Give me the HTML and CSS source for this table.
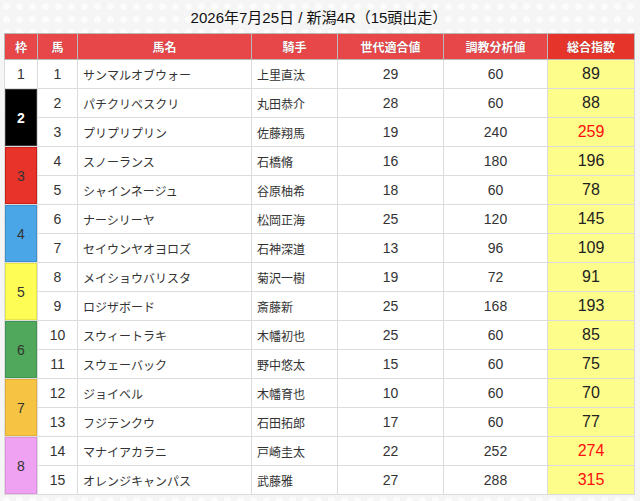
FILE: index.html
```html
<!DOCTYPE html>
<html lang="ja">
<head>
<meta charset="utf-8">
<title>新潟4R</title>
<link rel="stylesheet" href="styles.css">
</head>
<body>
<div class="page">
  <h1 class="title">2026年7月25日 / 新潟4R（15頭出走）</h1>
  <table class="tbl">
    <colgroup>
      <col class="c-waku"><col class="c-uma"><col class="c-name"><col class="c-jockey"><col class="c-gen"><col class="c-train"><col class="c-total">
    </colgroup>
    <thead>
      <tr><th>枠</th><th>馬</th><th>馬名</th><th>騎手</th><th>世代適合値</th><th>調教分析値</th><th class="th-total">総合指数</th></tr>
    </thead>
    <tbody>
      <tr><td class="waku w1">1</td><td class="num">1</td><td class="txt">サンマルオブウォー</td><td class="txt">上里直汰</td><td class="num">29</td><td class="num">60</td><td class="total">89</td></tr>
      <tr><td class="waku w2" rowspan="2">2</td><td class="num">2</td><td class="txt">パチクリベスクリ</td><td class="txt">丸田恭介</td><td class="num">28</td><td class="num">60</td><td class="total">88</td></tr>
      <tr><td class="num">3</td><td class="txt">プリプリプリン</td><td class="txt">佐藤翔馬</td><td class="num">19</td><td class="num">240</td><td class="total hot">259</td></tr>
      <tr><td class="waku w3" rowspan="2">3</td><td class="num">4</td><td class="txt">スノーランス</td><td class="txt">石橋脩</td><td class="num">16</td><td class="num">180</td><td class="total">196</td></tr>
      <tr><td class="num">5</td><td class="txt">シャインネージュ</td><td class="txt">谷原柚希</td><td class="num">18</td><td class="num">60</td><td class="total">78</td></tr>
      <tr><td class="waku w4" rowspan="2">4</td><td class="num">6</td><td class="txt">ナーシリーヤ</td><td class="txt">松岡正海</td><td class="num">25</td><td class="num">120</td><td class="total">145</td></tr>
      <tr><td class="num">7</td><td class="txt">セイウンヤオヨロズ</td><td class="txt">石神深道</td><td class="num">13</td><td class="num">96</td><td class="total">109</td></tr>
      <tr><td class="waku w5" rowspan="2">5</td><td class="num">8</td><td class="txt">メイショウバリスタ</td><td class="txt">菊沢一樹</td><td class="num">19</td><td class="num">72</td><td class="total">91</td></tr>
      <tr><td class="num">9</td><td class="txt">ロジザボード</td><td class="txt">斎藤新</td><td class="num">25</td><td class="num">168</td><td class="total">193</td></tr>
      <tr><td class="waku w6" rowspan="2">6</td><td class="num">10</td><td class="txt">スウィートラキ</td><td class="txt">木幡初也</td><td class="num">25</td><td class="num">60</td><td class="total">85</td></tr>
      <tr><td class="num">11</td><td class="txt">スウェーバック</td><td class="txt">野中悠太</td><td class="num">15</td><td class="num">60</td><td class="total">75</td></tr>
      <tr><td class="waku w7" rowspan="2">7</td><td class="num">12</td><td class="txt">ジョイベル</td><td class="txt">木幡育也</td><td class="num">10</td><td class="num">60</td><td class="total">70</td></tr>
      <tr><td class="num">13</td><td class="txt">フジテンクウ</td><td class="txt">石田拓郎</td><td class="num">17</td><td class="num">60</td><td class="total">77</td></tr>
      <tr><td class="waku w8" rowspan="2">8</td><td class="num">14</td><td class="txt">マナイアカラニ</td><td class="txt">戸崎圭太</td><td class="num">22</td><td class="num">252</td><td class="total hot">274</td></tr>
      <tr><td class="num">15</td><td class="txt">オレンジキャンパス</td><td class="txt">武藤雅</td><td class="num">27</td><td class="num">288</td><td class="total hot">315</td></tr>
    </tbody>
  </table>
</div>
</body>
</html>
```

FILE: styles.css
```css
html, body {
  margin: 0;
  padding: 0;
}
body {
  background-color: #f5f5f5;
  background-image: radial-gradient(circle, #fcfcfc 0, #fcfcfc 3px, rgba(255,255,255,0) 4px);
  background-size: 13px 13px;
  font-family: "Liberation Sans", "Noto Sans CJK JP", sans-serif;
  color: #333;
}
.page {
  padding: 8px 6px 0 4px;
  width: 630px;
}
.title {
  margin: 0 0 6px 0;
  height: 19px;
  line-height: 19px;
  font-size: 15px;
  font-weight: normal;
  text-align: center;
  color: #111;
}
.tbl {
  width: 630px;
  border-collapse: collapse;
  table-layout: fixed;
  background: #fff;
  border: 1px solid #d6d6d6;
}
.c-waku { width: 33px; }
.c-uma { width: 40px; }
.c-name { width: 174px; }
.c-jockey { width: 86px; }
.c-gen { width: 106px; }
.c-train { width: 104px; }
.c-total { width: 87px; }
.tbl th {
  height: 25px;
  padding: 0;
  background: #e8474a;
  color: #fff;
  font-size: 12px;
  font-weight: bold;
  text-shadow: 0 0 1px rgba(0,0,0,0.35);
  border: 1px solid #b9b9b9;
  text-align: center;
  vertical-align: middle;
}
.tbl th.th-total {
  background: #e5352a;
}
.tbl td {
  height: 28px;
  padding: 0;
  border: 1px solid #dcdcdc;
  font-size: 14px;
  vertical-align: middle;
  color: #333;
}
.tbl td.num {
  text-align: center;
}
.tbl td.txt {
  text-align: left;
  padding-left: 5px;
  font-size: 12px;
  white-space: nowrap;
}
.tbl td.total {
  text-align: center;
  background: #fdfd8c;
  font-size: 16px;
  font-weight: normal;
  color: #222;
}
.tbl td.total.hot {
  color: #ff0d0d;
}
.tbl td.waku {
  text-align: center;
  font-size: 14px;
  color: #333;
}
.w1 { background: #ffffff; }
.w2 { background: #000000; box-shadow: inset 0 0 0 1px #333; }
.tbl td.w2 { color: #fff; font-weight: bold; }
.w3 { background: #e8332b; box-shadow: inset 0 0 0 1px #c82018; }
.w4 { background: #4aa6e6; box-shadow: inset 0 0 0 1px #3e92cc; }
.w5 { background: #fdfd55; box-shadow: inset 0 0 0 1px #e6e64a; }
.w6 { background: #4fa85c; box-shadow: inset 0 0 0 1px #43944f; }
.w7 { background: #f7c342; box-shadow: inset 0 0 0 1px #e3b03a; }
.w8 { background: #f0a2f2; box-shadow: inset 0 0 0 1px #dc90de; }
```
